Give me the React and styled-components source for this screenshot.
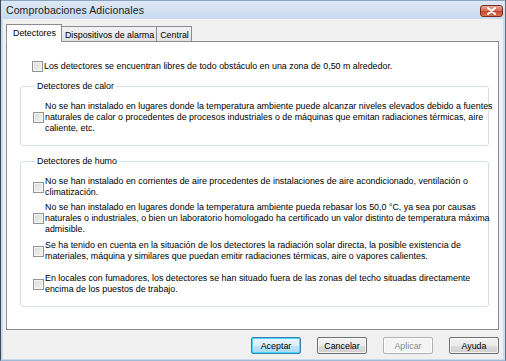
import React from "react";
import styled, { createGlobalStyle } from "styled-components";

const Global = createGlobalStyle`
  html, body { margin: 0; padding: 0; background: #ffffff; }
  body { font-family: "Liberation Sans", Arial, sans-serif; }
  * { box-sizing: border-box; }
`;

const Window = styled.div`
  width: 506px;
  height: 361px;
  display: flex;
  flex-direction: column;
  background: #c9dbef;
  border-left: 1px solid #3d4856;
  border-right: 1px solid #5f7186;
  border-bottom: 1px solid #9fb8d3;
  font-family: "Liberation Sans", Arial, sans-serif;
  font-size: 8.9px;
  color: #000;
`;

const TitleBar = styled.div`
  height: 19px;
  flex: none;
  display: flex;
  align-items: center;
  justify-content: space-between;
  padding: 0 2px 0 5px;
  background: linear-gradient(#dde8f5, #c8daef);
  border-top: 1px solid #8ea4bd;
`;

const Title = styled.span`
  font-size: 10.5px;
  color: #1b1b1b;
  letter-spacing: 0.1px;
`;

const CloseButton = styled.div`
  width: 23px;
  height: 12px;
  margin-top: 2px;
  border: 1px solid #7a2e22;
  border-radius: 3px;
  background: linear-gradient(#e9a898, #d4684f 50%, #c4442c 51%, #d7774f);
  display: flex;
  align-items: center;
  justify-content: center;
`;

const Client = styled.div`
  flex: 1;
  margin: 0 2px 1px 2px;
  background: #f0f0f0;
  display: flex;
  flex-direction: column;
  padding: 5px 0 0 3px;
`;

const TabStrip = styled.div`
  display: flex;
  align-items: flex-end;
  height: 17px;
  position: relative;
  z-index: 1;
`;

const Tab = styled.div`
  height: ${(p) => (p.$active ? "18px" : "15px")};
  padding: ${(p) => (p.$active ? "0 5px 0 6px" : "1px 2px 0 3px")};
  display: flex;
  align-items: center;
  border: 1px solid #898c95;
  border-bottom: ${(p) => (p.$active ? "1px solid #fff" : "none")};
  background: ${(p) => (p.$active ? "#ffffff" : "linear-gradient(#f2f2f2, #e3e3e3)")};
  margin-left: ${(p) => (p.$first ? "0" : "-1px")};
  margin-bottom: ${(p) => (p.$active ? "-1px" : "0")};
  white-space: nowrap;
`;

const Panel = styled.div`
  width: 493px;
  height: 289px;
  background: #ffffff;
  border: 1px solid #898c95;
  display: flex;
  flex-direction: column;
  padding: 19px 9px 0 13px;
`;

const Row = styled.div`
  display: flex;
  align-items: center;
  gap: 1px;
  margin-left: ${(p) => p.$indent || 0}px;
  margin-top: ${(p) => p.$top || 0}px;
`;

const CheckBox = styled.span`
  flex: none;
  width: 11px;
  height: 11px;
  border: 1px solid #939393;
  background: linear-gradient(135deg, #d9d9d9, #f4f4f4);
  box-shadow: inset 0 0 0 1px #f4f4f4;
`;

const Label = styled.span`
  line-height: 11px;
  white-space: nowrap;
`;

const Group = styled.fieldset`
  margin: ${(p) => p.$top}px 0 0 0;
  height: ${(p) => p.$height}px;
  border: 1px solid #d5dfe5;
  border-radius: 3px;
  padding: 0 0 0 12px;
  min-width: 0;
`;

const Legend = styled.legend`
  padding: 0 2px;
  margin-left: 2px;
  line-height: 11px;
`;

const ButtonBar = styled.div`
  display: flex;
  justify-content: flex-end;
  gap: 16px;
  width: 493px;
  margin-top: 7px;
`;

const Button = styled.div`
  width: ${(p) => p.$w || 50}px;
  height: 17px;
  display: flex;
  align-items: center;
  justify-content: center;
  border-radius: 2px;
  border: 1px solid ${(p) => (p.$default ? "#3c7fb1" : p.$disabled ? "#adb2b5" : "#707070")};
  background: ${(p) =>
    p.$disabled
      ? "#f4f4f4"
      : p.$default
      ? "linear-gradient(#eaf6fd 0%, #d9f0fc 50%, #bee6fd 51%, #a7d9f5 100%)"
      : "linear-gradient(#f2f2f2 0%, #ebebeb 50%, #dddddd 51%, #cfcfcf 100%)"};
  box-shadow: inset 0 0 0 1px ${(p) => (p.$default ? "#48d5fd" : "rgba(255,255,255,0.7)")};
  color: ${(p) => (p.$disabled ? "#8b8b8b" : "#000")};
`;

function Check({ children, indent, top }) {
  return (
    <Row $indent={indent} $top={top}>
      <CheckBox />
      <Label>{children}</Label>
    </Row>
  );
}

export default function App() {
  return (
    <>
      <Global />
      <Window>
        <TitleBar>
          <Title>Comprobaciones Adicionales</Title>
          <CloseButton>
            <svg width="9" height="8" viewBox="0 0 9 8">
              <path d="M1 1 L8 7 M8 1 L1 7" stroke="#ffffff" strokeWidth="2" strokeLinecap="round" />
            </svg>
          </CloseButton>
        </TitleBar>
        <Client>
          <TabStrip>
            <Tab $active $first>Detectores</Tab>
            <Tab>Dispositivos de alarma</Tab>
            <Tab>Central</Tab>
          </TabStrip>
          <Panel>
            <Check indent={12}>
              Los detectores se encuentran libres de todo obstáculo en una zona de 0,50 m alrededor.
            </Check>
            <Group $top={9} $height={65}>
              <Legend>Detectores de calor</Legend>
              <Check top={9}>
                No se han instalado en lugares donde la temperatura ambiente puede alcanzar niveles elevados debido a fuentes
                <br />
                naturales de calor o procedentes de procesos industriales o de máquinas que emitan radiaciones térmicas, aire
                <br />
                caliente, etc.
              </Check>
            </Group>
            <Group $top={10} $height={151}>
              <Legend>Detectores de humo</Legend>
              <Check top={9}>
                No se han instalado en corrientes de aire procedentes de instalaciones de aire acondicionado, ventilación o
                <br />
                climatización.
              </Check>
              <Check top={4}>
                No se han instalado en lugares donde la temperatura ambiente pueda rebasar los 50,0 °C, ya sea por causas
                <br />
                naturales o industriales, o bien un laboratorio homologado ha certificado un valor distinto de temperatura máxima
                <br />
                admisible.
              </Check>
              <Check top={5}>
                Se ha tenido en cuenta en la situación de los detectores la radiación solar directa, la posible existencia de
                <br />
                materiales, máquina y similares que puedan emitir radiaciones térmicas, aire o vapores calientes.
              </Check>
              <Check top={11}>
                En locales con fumadores, los detectores se han situado fuera de las zonas del techo situadas directamente
                <br />
                encima de los puestos de trabajo.
              </Check>
            </Group>
          </Panel>
          <ButtonBar>
            <Button $default>Aceptar</Button>
            <Button>Cancelar</Button>
            <Button $disabled>Aplicar</Button>
            <Button>Ayuda</Button>
          </ButtonBar>
        </Client>
      </Window>
    </>
  );
}
